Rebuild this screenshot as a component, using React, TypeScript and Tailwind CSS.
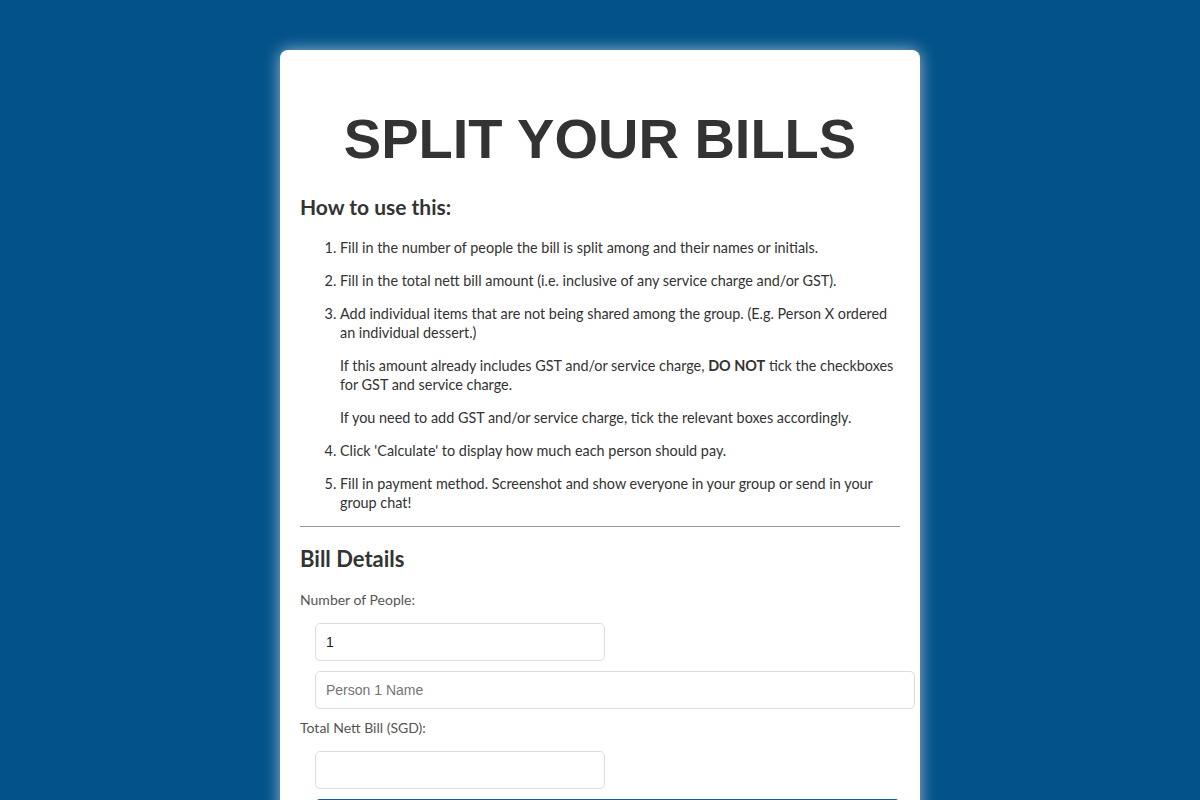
import React from 'react';

const body = { fontFamily: 'Lato, "Noto Sans", sans-serif' };
const arial = { fontFamily: '"Liberation Sans", Arial, sans-serif' };

export default function App() {
  return (
    <div className="min-h-screen bg-[#03528a] pt-[50px] pb-10" style={body}>
      {/* card */}
      <div className="mx-auto w-[640px] rounded-lg bg-white p-5 text-[#333] shadow-[0_0_16px_rgba(255,255,255,0.6)]">
        <h1
          className="mt-[37px] mb-[22px] text-center text-[56px] font-bold leading-[64px] text-[#333]"
          style={arial}
        >
          SPLIT YOUR BILLS
        </h1>

        <h2 className="text-[21px] font-bold leading-[28px]">How to use this:</h2>

        <ol className="mt-[17px] list-decimal pl-10 text-[14.4px] leading-[19px] text-[#333]">
          <li className="mb-[14px]">
            <p>Fill in the number of people the bill is split among and their names or initials.</p>
          </li>
          <li className="mb-[14px]">
            <p>Fill in the total nett bill amount (i.e. inclusive of any service charge and/or GST).</p>
          </li>
          <li className="mb-[14px]">
            <p>
              Add individual items that are not being shared among the group. (E.g. Person X ordered an
              individual dessert.)
            </p>
            <p className="mt-[14px]">
              If this amount already includes GST and/or service charge, <b>DO NOT</b> tick the checkboxes for
              GST and service charge.
            </p>
            <p className="mt-[14px]">If you need to add GST and/or service charge, tick the relevant boxes accordingly.</p>
          </li>
          <li className="mb-[14px]">
            <p>Click 'Calculate' to display how much each person should pay.</p>
          </li>
          <li>
            <p>Fill in payment method. Screenshot and show everyone in your group or send in your group chat!</p>
          </li>
        </ol>

        <hr className="mt-[14px] border-t border-[#999]" />

        {/* bill details */}
        <h2 className="mt-[18px] text-[22px] font-bold leading-[28px]">Bill Details</h2>

        <label className="mt-[17px] block text-[14px] leading-[19px] text-[#555]">Number of People:</label>
        <div className="ml-[15px] mt-[14px] flex flex-col gap-[10px]">
          <input
            defaultValue="1"
            className="h-[38px] w-[290px] rounded-[5px] border border-[#ddd] px-[10px] text-[14px] text-[#222] outline-none"
            style={arial}
          />
          <input
            placeholder="Person 1 Name"
            className="h-[38px] w-[600px] rounded-[5px] border border-[#ddd] px-[10px] text-[14px] text-[#222] outline-none placeholder:text-[#757575]"
            style={arial}
          />
        </div>

        <label className="mt-[9px] block text-[14px] leading-[19px] text-[#555]">Total Nett Bill (SGD):</label>
        <div className="ml-[15px] mt-[14px]">
          <input
            className="h-[38px] w-[290px] rounded-[5px] border border-[#ddd] px-[10px] text-[14px] outline-none"
            style={arial}
          />
        </div>

        <button className="ml-[15px] mt-[10px] h-[40px] w-[585px] rounded-t-[5px] bg-[#0d5ea8] text-[14px] text-white">
          Add Item
        </button>
      </div>
    </div>
  );
}
